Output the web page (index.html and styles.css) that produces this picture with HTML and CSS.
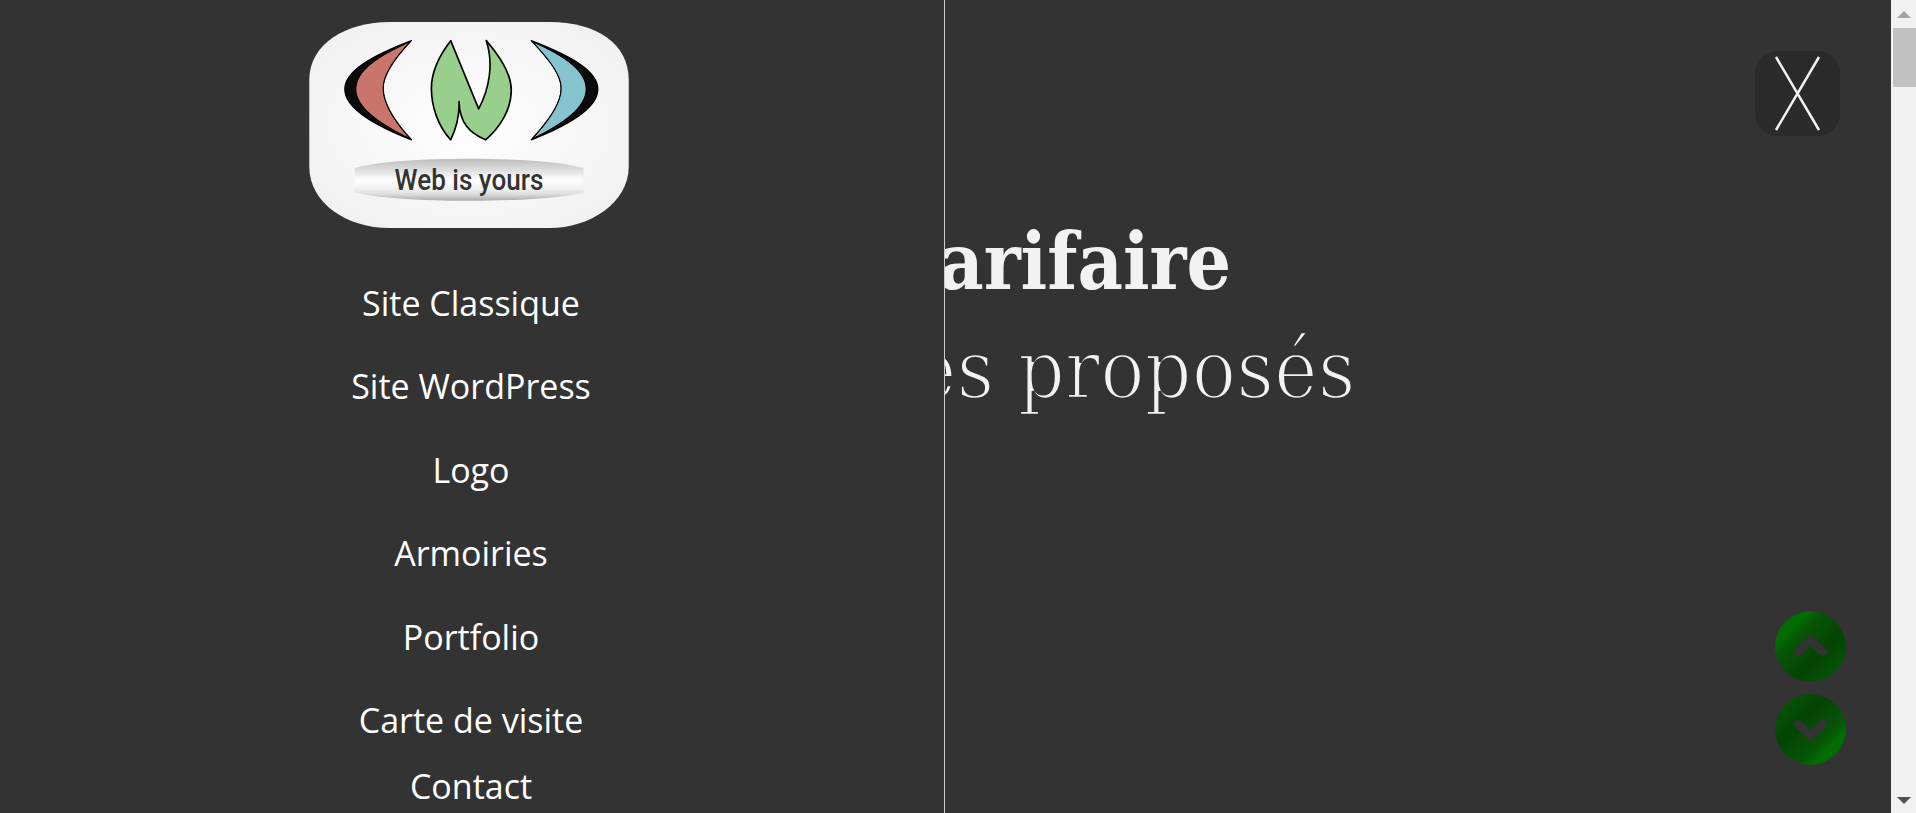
FILE: index.html
```html
<!DOCTYPE html>
<html lang="fr">
<head>
    <meta charset="UTF-8">
    <meta name="viewport" content="width=device-width, initial-scale=1.0">
    <title>Grille tarifaire</title>
    <link rel="stylesheet" href="styles.css">
</head>
<body>
    <div class="page">
        <main class="stage">
            <nav class="sidebar">
                <svg class="logo" viewBox="58 66 960 619" width="320" height="206">
                    <defs>
                        <radialGradient id="logoBg" cx="50%" cy="50%" r="60%">
                            <stop offset="0" stop-color="#ffffff"/>
                            <stop offset="1" stop-color="#f1f1f1"/>
                        </radialGradient>
                        <linearGradient id="pillBg" x1="0" y1="0" x2="0" y2="1">
                            <stop offset="0" stop-color="#bdbdbd"/>
                            <stop offset="0.3" stop-color="#e2e2e2"/>
                            <stop offset="0.5" stop-color="#ffffff"/>
                            <stop offset="0.72" stop-color="#f0f0f0"/>
                            <stop offset="0.85" stop-color="#dcdcdc"/>
                            <stop offset="1" stop-color="#aaaaaa"/>
                        </linearGradient>
                    </defs>
                    <path fill="url(#logoBg)" d="M300 66H780C920 66 1018 130 1018 240V500C1018 610 900 685 780 685H300C170 685 58 610 58 500V240C58 130 170 66 300 66Z"/>
                    <path fill="#0b0b0b" stroke="#000" stroke-width="4" stroke-linejoin="round" d="M365 122C240 170 165 215 165 268C165 325 250 375 365 420C310 360 280 310 280 265C280 225 310 180 365 122Z"/>
                    <path fill="#c9756b" stroke="#000" stroke-width="3" d="M360 126C260 170 198 215 198 268C198 320 265 370 360 416C310 360 280 310 280 265C280 225 310 180 360 126Z"/>
                    <path fill="#0b0b0b" stroke="#000" stroke-width="4" stroke-linejoin="round" d="M725 122C850 170 925 215 925 268C925 325 840 375 725 420C780 360 815 310 815 265C815 225 780 180 725 122Z"/>
                    <path fill="#85c4cf" stroke="#000" stroke-width="3" d="M730 126C830 170 890 215 890 268C890 320 825 370 730 416C780 360 815 310 815 265C815 225 780 180 730 126Z"/>
                    <path fill="#98cf8c" stroke="#000" stroke-width="5" stroke-linejoin="round" d="M483 122L567 327C600 265 612 190 590 122C640 180 665 230 665 270C665 330 630 385 588 420C540 400 510 370 508 305C510 350 500 385 483 420C445 380 425 320 425 265C425 210 450 165 483 122Z"/>
                    <path fill="url(#pillBg)" d="M195 505C260 485 400 477 538 477C680 477 820 485 882 505V578C820 595 680 603 538 603C400 603 260 595 195 578Z"/>
                    <text class="logo-text" x="538" y="570" text-anchor="middle" textLength="447" lengthAdjust="spacingAndGlyphs">Web is yours</text>
                </svg>
                <ul class="menu">
                    <li><a href="#">Site Classique</a></li>
                    <li><a href="#">Site WordPress</a></li>
                    <li><a href="#">Logo</a></li>
                    <li><a href="#">Armoiries</a></li>
                    <li><a href="#">Portfolio</a></li>
                    <li><a href="#">Carte de visite</a></li>
                    <li><a href="#">Contact</a></li>
                </ul>
            </nav>

            <section class="hero">
                <h1>Grille tarifaire</h1>
                <h2>Les services proposés</h2>
            </section>

            <button class="close-btn" type="button" aria-label="Fermer">
                <svg viewBox="0 0 85 85" width="85" height="85">
                    <path d="M21 6L64 79M64 6L21 79" fill="none" stroke="#f2f2f2" stroke-width="2.500"/>
                </svg>
            </button>

            <div class="scroll-btns">
                <a class="scroll-btn" href="#" aria-label="Haut">
                    <svg viewBox="0 0 71 71" width="71" height="71">
                        <path d="M23 41L35.500 29L48 41" fill="none" stroke="#333" stroke-width="8" stroke-linecap="round"/>
                    </svg>
                </a>
                <a class="scroll-btn scroll-btn-down" href="#" aria-label="Bas">
                    <svg viewBox="0 0 71 71" width="71" height="71">
                        <path d="M23 30L35.500 42L48 30" fill="none" stroke="#333" stroke-width="8" stroke-linecap="round"/>
                    </svg>
                </a>
            </div>
        </main>

        <div class="scrollbar">
            <span class="arrow arrow-up"></span>
            <div class="track"><div class="thumb"></div></div>
            <span class="arrow arrow-down"></span>
        </div>
    </div>
</body>
</html>
```

FILE: styles.css
```css
body {
    margin: 0;
    background-color: #333;
    font-family: "Open Sans", sans-serif;
    color: #fff;
    overflow: hidden;
}

.page {
    display: flex;
    height: 813px;
}

.stage {
    flex: 1;
    display: flex;
    position: relative;
    overflow: hidden;
}

.sidebar {
    flex: 0 0 944px;
    border-right: 1px solid #ccc;
    display: flex;
    flex-direction: column;
    align-items: center;
    padding-top: 22px;
}

.logo {
    display: block;
    flex-shrink: 0;
    margin-right: 6px;
}

.logo-text {
    font-family: Roboto, sans-serif;
    font-weight: 500;
    font-size: 86px;
    fill: #333;
}

.menu {
    list-style: none;
    flex-shrink: 0;
    margin: 52px 2px 0 0;
    padding: 0;
    text-align: center;
    font-size: 34px;
    line-height: 46px;
}

.menu li {
    padding-bottom: 37.400px;
}

.menu li:nth-child(6) {
    padding-bottom: 20px;
}

.menu a {
    color: #fff;
    text-decoration: none;
}

/* the headings run on under the sidebar, only their right part shows */
.hero {
    flex: 1;
    min-width: 0;
    overflow: hidden;
    padding-top: 208px;
    text-align: center;
    white-space: nowrap;
    color: #f2f2f2;
    font-family: "DejaVu Serif", serif;
    font-stretch: condensed;
    line-height: 108px;
}

.hero h1,
.hero h2 {
    width: 1891px;
    margin: 0 0 0 -945px;
}

.hero h1 {
    font-size: 78px;
    font-weight: 700;
}

.hero h2 {
    font-size: 82px;
    font-weight: 400;
    -webkit-text-stroke: 2.500px #333;
}

.close-btn {
    position: absolute;
    top: 51px;
    right: 51px;
    width: 85px;
    height: 85px;
    padding: 0;
    border: none;
    border-radius: 22px;
    background-color: #2b2b2b;
}

.close-btn svg,
.scroll-btn svg {
    display: block;
}

.scroll-btns {
    position: absolute;
    top: 611px;
    right: 45px;
    display: flex;
    flex-direction: column;
    gap: 12px;
}

.scroll-btn {
    display: block;
    width: 71px;
    height: 71px;
    border-radius: 50%;
    background: linear-gradient(135deg, #0a5a0a 0%, #006f00 24%, #075607 33%, #044404 62%, #055a05 100%);
}

.scroll-btn-down {
    background: linear-gradient(315deg, #0a5a0a 0%, #006f00 24%, #075607 33%, #044404 62%, #055a05 100%);
}

.scrollbar {
    width: 25px;
    background-color: #f1f1f1;
    display: flex;
    flex-direction: column;
    align-items: center;
}

.arrow {
    width: 0;
    height: 0;
    border-left: 7px solid transparent;
    border-right: 7px solid transparent;
}

.arrow-up {
    margin: 11px 0 10px;
    border-bottom: 7px solid #a3a3a3;
}

.arrow-down {
    margin: 0 0 9px;
    border-top: 7px solid #505050;
}

.track {
    flex: 1;
    align-self: stretch;
    padding-left: 2px;
}

.thumb {
    height: 59px;
    background-color: #c1c1c1;
}
```
